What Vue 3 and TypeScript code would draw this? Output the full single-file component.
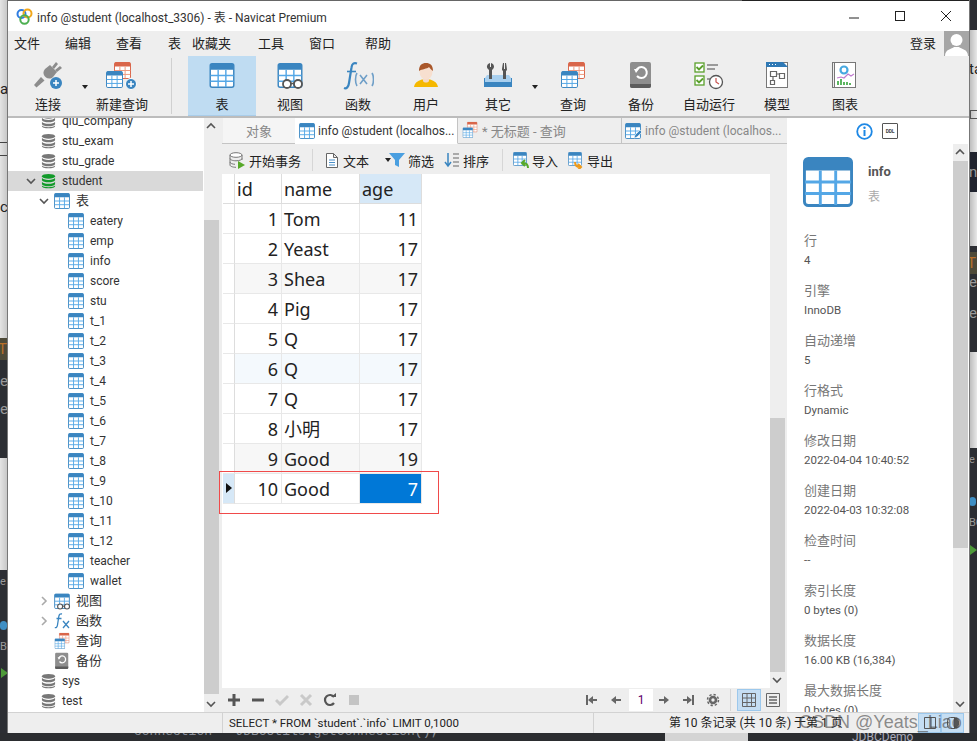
<template>
  <div class="desk">
    <svg class="defs" width="0" height="0">
      <defs>
        <symbol id="tb" viewBox="0 0 26 26">
          <rect x="0.75" y="0.75" width="24.5" height="24.5" rx="2" fill="#fff" stroke="#3a85c0" stroke-width="1.5" />
          <path d="M1 2.5a2 2 0 0 1 2-2h20a2 2 0 0 1 2 2V7H1z" fill="#3a85c0" />
          <path d="M1 13h24M1 19h24M9 7v18M17 7v18" stroke="#54a7e6" stroke-width="1.5" fill="none" />
        </symbol>
        <symbol id="tbo" viewBox="0 0 26 26">
          <rect x="0.75" y="0.75" width="24.5" height="24.5" rx="2" fill="#fff" stroke="#d9664a" stroke-width="1.5" />
          <path d="M1 2.5a2 2 0 0 1 2-2h20a2 2 0 0 1 2 2V7H1z" fill="#d9664a" />
          <path d="M1 13h24M1 19h24M9 7v18M17 7v18" stroke="#ee9a80" stroke-width="1.5" fill="none" />
        </symbol>
        <symbol id="db" viewBox="0 0 16 16">
          <ellipse cx="8" cy="3" rx="7" ry="2.6" fill="currentColor" />
          <path d="M1 4.6c1 1.6 3.5 2.2 7 2.2s6-.6 7-2.2v2.6C14 8.8 11.500 9.400 8 9.400S2 8.800 1 7.200z" fill="currentColor" />
          <path d="M1 8.800c1 1.600 3.500 2.200 7 2.200s6-.6 7-2.200v2.600C14 13 11.500 13.600 8 13.600S2 13 1 11.400z" fill="currentColor" />
          <path d="M1 12.800c1 1.200 3.500 1.800 7 1.800s6-.6 7-1.800v.7c0 1.300-3.100 2.300-7 2.300s-7-1-7-2.300z" fill="currentColor" />
        </symbol>
        <symbol id="i-conn" viewBox="0 0 32 30">
          <g fill="#8c8c8c">
            <path d="M18 4l7 7-4 5c-2 2-5 2-7 .5l-1.500-1.500c-1.500-2-1.500-5 .5-7z" />
            <path d="M20 6l4-5 2 2-4 5zM23 9l5-4 2 2-5 4z" />
            <path d="M9 16l-7 8 2.500 2.500 8-7z" />
          </g>
          <circle cx="24" cy="22" r="6" fill="#3a85c0" />
          <path d="M21 22h6M24 19v6" stroke="#fff" stroke-width="1.500" />
        </symbol>
        <symbol id="i-new" viewBox="0 0 32 30">
          <use href="#tbo" x="8" y="1" width="17" height="17" />
          <use href="#tb" x="0" y="10" width="17" height="17" />
          <circle cx="25" cy="23" r="5.500" fill="#3a85c0" stroke="#fff" />
          <path d="M22 23h6M25 20v6" stroke="#fff" stroke-width="1.500" />
        </symbol>
        <symbol id="i-table" viewBox="0 0 32 30">
          <use href="#tb" x="3" y="2" width="26" height="25" />
        </symbol>
        <symbol id="i-view" viewBox="0 0 32 30">
          <use href="#tb" x="3" y="2" width="26" height="25" />
          <circle cx="13" cy="23" r="4" fill="#fff" stroke="#555" stroke-width="1.800" />
          <circle cx="24" cy="23" r="4" fill="#fff" stroke="#555" stroke-width="1.800" />
          <path d="M17 22.500h3" stroke="#555" stroke-width="1.500" />
        </symbol>
        <symbol id="i-fx" viewBox="0 0 32 30">
          <path d="M15 2.500c-3-1-5 0-5.500 4L7 22c-.5 4-2.500 6-5 5" fill="none" stroke="#3a85c0" stroke-width="2.200" />
          <path d="M5 10.500h9" stroke="#3a85c0" stroke-width="1.600" />
          <path d="M15 12c-2 3-2 10 0 13M30 12c2 3 2 10 0 13M18 14l7 9M25 14l-7 9" fill="none" stroke="#6f9fc8" stroke-width="1.600" />
        </symbol>
        <symbol id="i-fxs" viewBox="0 0 16 16">
          <path d="M8 1C6 .5 5.200 1.500 4.800 3.500L3.500 12c-.3 2-1.300 3-2.700 2.500" fill="none" stroke="#3a85c0" stroke-width="1.300" />
          <path d="M2.500 5.500h5M9 8l6 7M15 8l-6 7" fill="none" stroke="#3a85c0" stroke-width="1.300" />
        </symbol>
        <symbol id="i-user" viewBox="0 0 32 30">
          <path d="M4 26c1-6 6-6.500 8-7.500h8c2 1 7 1.500 8 7.500z" fill="#f5b800" />
          <path d="M13 16h6v4c-1 2-5 2-6 0z" fill="#f3d9c8" />
          <ellipse cx="16" cy="10.500" rx="6.500" ry="8" fill="#f7dfcf" />
          <path d="M9 10c0-6 3-8 7-8s7 2 7 8c-2-1-3-3-4-4-2 2-7 2-10 4z" fill="#a9572a" />
        </symbol>
        <symbol id="i-other" viewBox="0 0 32 30">
          <path d="M2 17h3v3h22v-3h3v9H2z" fill="#3a85c0" />
          <path d="M3 17l2-3h22l2 3v4H3z" fill="#a9d0ef" />
          <path d="M8 2c-3 1-4 4-2 6l1 1v9h3V9l1-1c2-2 1-5-2-6v4H8z" fill="#555" />
          <path d="M21 2c0 0-1 5-1 7l1 1v8h3v-8l1-1c0-2-1-7-1-7h-1v6h-1V2z" fill="#555" />
        </symbol>
        <symbol id="i-query" viewBox="0 0 32 30">
          <use href="#tbo" x="11" y="1" width="17" height="17" />
          <use href="#tb" x="4" y="10" width="17" height="17" />
        </symbol>
        <symbol id="i-backup" viewBox="0 0 32 30">
          <rect x="5" y="1" width="21" height="26" rx="2" fill="#8e8e8e" />
          <path d="M5 23h21v2a2 2 0 0 1-2 2H7a2 2 0 0 1-2-2z" fill="#5c5c5c" />
          <path d="M11 10a5.500 5.500 0 1 1 1 5" fill="none" stroke="#fff" stroke-width="2" />
          <path d="M9 8l5 0-3 4z" fill="#fff" />
        </symbol>
        <symbol id="i-auto" viewBox="0 0 32 30">
          <rect x="2" y="2" width="9" height="9" fill="#fff" stroke="#5aa02c" stroke-width="1.300" />
          <rect x="2" y="15" width="9" height="9" fill="#fff" stroke="#5aa02c" stroke-width="1.300" />
          <path d="M3.500 6l2.500 2.500 4-4M3.500 19l2.500 2.500 4-4" fill="none" stroke="#5aa02c" stroke-width="1.800" />
          <path d="M14 4h11M14 8h8M14 18h3" stroke="#9a9a9a" stroke-width="1.800" />
          <circle cx="23" cy="21" r="6.500" fill="#fff" stroke="#555" stroke-width="1.300" />
          <path d="M23 17v4l3 2" fill="none" stroke="#c9534f" stroke-width="1.200" />
        </symbol>
        <symbol id="i-model" viewBox="0 0 32 30">
          <rect x="5.500" y="1.500" width="21" height="25" fill="#fff" stroke="#777" />
          <path d="M5 1h17l5 5H5z" fill="#2f79b5" />
          <path d="M8 3.500h1M11 3.500h1M14 3.500h1" stroke="#fff" />
          <path d="M9.500 10.500h6v5h-6zM18.500 12.500h5v5h-5zM9.500 19.500h4v4h-4zM15.500 13h3M12 15.500v4" fill="none" stroke="#666" stroke-width="1.200" />
        </symbol>
        <symbol id="i-chart" viewBox="0 0 32 30">
          <rect x="3.500" y="1.500" width="3" height="25" fill="#eee" stroke="#777" />
          <rect x="5.500" y="1.500" width="21" height="25" fill="#fff" stroke="#777" />
          <circle cx="15" cy="9" r="3.500" fill="none" stroke="#47a8e0" stroke-width="2.200" />
          <path d="M8 17l4-1 3 1 4-4 3 2 3-2" fill="none" stroke="#c07ccf" stroke-width="1.200" />
          <path d="M9 24v-4M12 24v-6M15 24v-3M18 24v-3M21 24v-2" stroke="#4caf50" stroke-width="1.800" />
        </symbol>
      </defs>
    </svg>

    <!-- 窗口背后露出的桌面 -->
    <div class="back back-left">
      <span class="b-a">a</span>
      <span class="b-lines"></span>
      <span class="b-c">c</span>
      <div class="b-dark b-dark1"><span class="b-t">T</span><span class="b-e e1">e</span><span class="b-e e2">e</span></div>
      <div class="b-dark b-dark2">
        <span class="b-e small l-e">e</span>
        <span class="b-bird l-bird"></span>
        <span class="b-e small l-bc">BC</span>
        <span class="b-play l-play"></span>
      </div>
    </div>
    <div class="back back-right">
      <div class="b-dark r-top"></div>
      <span class="b-ta">ta</span>
      <span class="b-box"></span>
      <div class="b-navy">n</div>
      <div class="b-dark r-mid"><span class="b-t t2">T</span><span class="b-e e3">e</span><span class="b-e e4">e</span></div>
      <div class="b-dark r-low">
        <span class="b-e small r-e">e</span>
        <span class="b-bird r-bird"></span>
        <span class="b-e small r-bc">BC</span>
        <span class="b-play r-play"></span>
      </div>
    </div>
    <div class="back-bottom">
      <span class="code">connection = JDBCUtils.getConnection();</span>
      <i class="strip"></i>
      <span class="jd">JDBCDemo</span>
    </div>

    <div class="window">
      <header class="titlebar">
        <svg class="logo" width="17" height="17" viewBox="0 0 17 17">
          <circle cx="5.500" cy="6" r="4" fill="none" stroke="#2f7de1" stroke-width="2" />
          <circle cx="11.500" cy="5.500" r="4" fill="none" stroke="#f2a71b" stroke-width="2" />
          <circle cx="8.500" cy="11.500" r="4.200" fill="none" stroke="#4caf50" stroke-width="2" />
        </svg>
        <span class="title">info @student (localhost_3306) - 表 - Navicat Premium</span>
        <div class="winctl">
          <svg width="12" height="12" viewBox="0 0 12 12"><path d="M1 8h10" stroke="#222" /></svg>
          <svg width="12" height="12" viewBox="0 0 12 12"><rect x="1.500" y="1.500" width="9" height="9" fill="none" stroke="#222" /></svg>
          <svg width="12" height="12" viewBox="0 0 12 12"><path d="M1 1l10 10M11 1L1 11" stroke="#222" /></svg>
        </div>
      </header>

      <nav class="menubar">
        <span v-for="m in menus" :key="m.t" class="menu" :style="{ width: m.w + 'px' }">{{ m.t }}</span>
        <span class="login">登录</span>
        <div class="avatar">
          <svg width="25" height="25" viewBox="0 0 25 25">
            <circle cx="12.500" cy="9" r="6" fill="#fff" />
            <path d="M1 25c0-7 7-7 9-9h5c2 2 9 2 9 9z" fill="#fff" />
          </svg>
        </div>
      </nav>

      <div class="toolbar">
        <div v-for="b in tools" :key="b.label" class="tool" :class="[b.cls, { on: b.on }]">
          <svg width="32" height="30"><use :href="'#i-' + b.icon" /></svg>
          <span>{{ b.label }}</span>
          <i v-if="b.arrow" class="drop"></i>
        </div>
      </div>

      <div class="body">
        <aside class="side">
          <div class="tree">
            <div
              v-for="r in tree"
              :key="r.name"
              class="node"
              :class="{ sel: r.sel }"
              :style="{ paddingLeft: r.pad + 'px' }"
            >
              <svg v-if="r.chev" class="chev" width="10" height="10" viewBox="0 0 10 10">
                <path
                  :d="r.chev === 'open' ? 'M1 3l4 4 4-4' : 'M3 1l4 4-4 4'"
                  fill="none"
                  :stroke="r.chev === 'open' ? '#555' : '#aaa'"
                  stroke-width="1.600"
                />
              </svg>
              <svg
                v-if="r.icon === 'db' || r.icon === 'dbon'"
                class="ic"
                width="15"
                height="16"
                :class="r.icon"
              ><use href="#db" /></svg>
              <svg v-else-if="r.wide" class="ic wide" width="20" height="19"><use :href="r.icon" /></svg>
              <svg v-else class="ic" width="16" height="16"><use :href="r.icon" /></svg>
              <span class="nm" :class="{ cj: r.big }">{{ r.name }}</span>
            </div>
          </div>
          <div class="vbar tree-bar">
            <svg class="arr" width="10" height="10" viewBox="0 0 10 10"><path d="M1 7l4-4 4 4" fill="none" stroke="#555" stroke-width="1.600" /></svg>
            <div class="spacer" style="height: 89px"></div>
            <div class="thumb" style="height: 474px"></div>
            <svg class="arr dn" width="10" height="10" viewBox="0 0 10 10"><path d="M1 3l4 4 4-4" fill="none" stroke="#555" stroke-width="1.600" /></svg>
          </div>
        </aside>

        <main class="center">
          <div class="tabs">
            <div class="tab obj">对象</div>
            <div class="tab act">
              <svg width="16" height="16"><use href="#tb" /></svg>
              <span>info @student (localhos...</span>
            </div>
            <div class="tab q">
              <svg class="wide" width="20" height="19"><use href="#i-query" /></svg>
              <span>* 无标题 - 查询</span>
            </div>
            <div class="tab last">
              <svg width="16" height="16"><use href="#tb" /><path d="M9 15l1-3 5-5 2 2-5 5z" fill="#3a85c0" stroke="#fff" stroke-width=".6" /></svg>
              <span>info @student (localhos...</span>
            </div>
          </div>

          <div class="actions">
            <div class="act-item" style="width: 83px">
              <svg width="17" height="17" viewBox="0 0 17 17">
                <ellipse cx="7" cy="3" rx="6" ry="2.300" fill="#fff" stroke="#777" />
                <path d="M1 3v10c0 1.300 2.700 2.300 6 2.300M13 3v5M1 6.500c0 1.300 2.700 2.300 6 2.300s6-1 6-2.300M1 10c0 1.300 2.700 2.300 5 2.300" fill="none" stroke="#777" />
                <path d="M9 9l7 4-7 4z" fill="#57a829" />
              </svg>
              <span>开始事务</span>
            </div>
            <i class="vsep"></i>
            <div class="act-item" style="width: 65px; margin-left: 11px">
              <svg width="16" height="17" viewBox="0 0 16 17">
                <path d="M2.500 1.500h7l4 4v10h-11zM9.500 1.500v4h4" fill="#fff" stroke="#666" />
                <path d="M5 8h6M5 10.500h6M5 13h6" stroke="#4a90c9" />
              </svg>
              <span>文本</span>
              <i class="drop small"></i>
            </div>
            <div class="act-item" style="width: 55px">
              <svg width="16" height="16" viewBox="0 0 16 16"><path d="M0 1h16L10 8v7l-4-2V8z" fill="#4a9fe0" /></svg>
              <span>筛选</span>
            </div>
            <div class="act-item" style="width: 58px">
              <svg width="16" height="16" viewBox="0 0 16 16">
                <path d="M4 1v12M1 10l3 4 3-4" fill="none" stroke="#3a85c0" stroke-width="1.500" />
                <path d="M9 2h6M9 6h6M9 10h6M9 14h6" stroke="#666" />
              </svg>
              <span>排序</span>
            </div>
            <i class="vsep"></i>
            <div class="act-item" style="width: 55px; margin-left: 10px">
              <svg width="16" height="17"><use href="#tb" width="14" height="14" /><path d="M15 16c0-3-2-5-5-5M12 8l-3 3 3 3" fill="none" stroke="#57a829" stroke-width="2" /></svg>
              <span>导入</span>
            </div>
            <div class="act-item">
              <svg width="16" height="17"><use href="#tb" width="14" height="14" /><path d="M7 10c0 3 2 5 5 5M10 12l3 3-3 3" fill="none" stroke="#ef9a1a" stroke-width="2" /></svg>
              <span>导出</span>
            </div>
          </div>

          <div class="gridwrap">
            <div class="grid">
              <div class="g-row head">
                <div class="c ind"></div>
                <div class="c id">id</div>
                <div class="c name">name</div>
                <div class="c age cur">age</div>
              </div>
              <div v-for="(r, i) in rows" :key="r.id" class="g-row" :class="rowClass(i)">
                <div class="c ind"><i v-if="i === 9" class="mark"></i></div>
                <div class="c id num">{{ r.id }}</div>
                <div class="c name">{{ r.name }}</div>
                <div class="c age num">{{ r.age }}</div>
              </div>
            </div>
            <div class="vbar grid-bar">
              <div class="spacer" style="height: 244px"></div>
              <div class="thumb" style="height: 254px"></div>
              <svg class="arr dn" width="10" height="10" viewBox="0 0 10 10"><path d="M1 3l4 4 4-4" fill="none" stroke="#555" stroke-width="1.600" /></svg>
            </div>
            <div class="redbox"></div>
          </div>

          <div class="gridfoot">
            <div class="ed">
              <svg width="14" height="14" viewBox="0 0 14 14"><path d="M7 1v12M1 7h12" stroke="#555" stroke-width="3" /></svg>
              <svg width="14" height="14" viewBox="0 0 14 14"><path d="M1 7h12" stroke="#555" stroke-width="3" /></svg>
              <svg width="14" height="14" viewBox="0 0 14 14"><path d="M1 7l4 4 8-8" fill="none" stroke="#c9c9c9" stroke-width="3" /></svg>
              <svg width="14" height="14" viewBox="0 0 14 14"><path d="M2 2l10 10M12 2L2 12" stroke="#c9c9c9" stroke-width="3" /></svg>
              <svg width="14" height="14" viewBox="0 0 14 14"><path d="M11 4a5 5 0 1 0 0 6" fill="none" stroke="#555" stroke-width="2.200" /><path d="M8 4h5V0z" fill="#555" /></svg>
              <svg width="14" height="14" viewBox="0 0 14 14"><rect x="2" y="2" width="10" height="10" fill="#c4c4c4" /></svg>
            </div>
            <div class="pager">
              <svg width="14" height="14" viewBox="0 0 14 14"><path d="M2 2v10M12 7H6" fill="none" stroke="#666" stroke-width="2" /><path d="M8 3L3 7l5 4z" fill="#666" /></svg>
              <svg width="14" height="14" viewBox="0 0 14 14"><path d="M12 7H6" stroke="#666" stroke-width="2" /><path d="M7 3L2 7l5 4z" fill="#666" /></svg>
              <span class="page">1</span>
              <svg class="after-page" width="14" height="14" viewBox="0 0 14 14"><path d="M2 7h6" stroke="#666" stroke-width="2" /><path d="M7 3l5 4-5 4z" fill="#666" /></svg>
              <svg width="14" height="14" viewBox="0 0 14 14"><path d="M12 2v10M2 7h6" fill="none" stroke="#666" stroke-width="2" /><path d="M6 3l5 4-5 4z" fill="#666" /></svg>
              <svg class="gear" width="14" height="14" viewBox="0 0 14 14"><circle cx="7" cy="7" r="3" fill="none" stroke="#666" stroke-width="2.600" /><circle cx="7" cy="7" r="5.500" fill="none" stroke="#666" stroke-width="1.500" stroke-dasharray="2.300 2" /></svg>
              <i class="vsep foot-sep"></i>
              <span class="mode on">
                <svg width="14" height="14" viewBox="0 0 14 14"><path d="M.5.5h13v13H.5zM.5 5h13M.5 9.500h13M5 .5v13M9.500.5v13" fill="none" stroke="#666" /></svg>
              </span>
              <svg class="form" width="14" height="14" viewBox="0 0 14 14"><path d="M.5.5h13v13H.5z" fill="none" stroke="#666" /><path d="M3 4h8M3 7h8M3 10h8" stroke="#666" stroke-width="1.500" /></svg>
            </div>
          </div>
        </main>

        <aside class="info">
          <div class="info-tabs">
            <svg width="17" height="17" viewBox="0 0 17 17">
              <circle cx="8.500" cy="8.500" r="7.300" fill="none" stroke="#1e88e5" stroke-width="1.800" />
              <path d="M8.500 7v6" stroke="#1e88e5" stroke-width="2" />
              <circle cx="8.500" cy="4.700" r="1.200" fill="#1e88e5" />
            </svg>
            <span class="ddl">DDL</span>
          </div>
          <div class="info-main">
            <div class="info-body">
              <div class="info-head">
                <svg width="52" height="50"><use href="#tb" width="52" height="50" /></svg>
                <div class="info-title">
                  <b>info</b>
                  <span>表</span>
                </div>
              </div>
              <div v-for="p in props" :key="p.k" class="prop">
                <span class="k">{{ p.k }}</span>
                <span class="v">{{ p.v }}</span>
              </div>
            </div>
            <div class="vbar info-bar">
              <svg class="arr" width="10" height="10" viewBox="0 0 10 10"><path d="M1 7l4-4 4 4" fill="none" stroke="#555" stroke-width="1.600" /></svg>
              <div class="thumb" style="height: 387px"></div>
              <svg class="arr dn" width="10" height="10" viewBox="0 0 10 10"><path d="M1 3l4 4 4-4" fill="none" stroke="#555" stroke-width="1.600" /></svg>
            </div>
          </div>
        </aside>
      </div>

      <footer class="status">
        <div class="s-sql">SELECT * FROM `student`.`info` LIMIT 0,1000</div>
        <div class="s-count">第 10 条记录 (共 10 条) 于第 1 页</div>
        <span class="s-btn">
          <svg width="14" height="14" viewBox="0 0 14 14"><path d="M1.500 1.500h11v11h-11zM8 1.500v11" fill="none" stroke="#555" /></svg>
        </span>
        <span class="s-btn">
          <svg width="14" height="14" viewBox="0 0 14 14"><rect x="1.500" y="1.500" width="11" height="11" rx="3" fill="none" stroke="#555" /><path d="M8 2h3l1 2v6l-1 2H8z" fill="#555" /></svg>
        </span>
      </footer>
    </div>
    <div class="watermark">CSDN @Yeats_Liao</div>
  </div>
</template>

<script setup lang="ts">
interface TreeRow {
  name: string
  pad: number
  icon: string
  chev?: 'open' | 'closed'
  sel?: boolean
  big?: boolean
  wide?: boolean
}

const menus = [
  { t: '文件', w: 51 },
  { t: '编辑', w: 51 },
  { t: '查看', w: 52 },
  { t: '表', w: 24 },
  { t: '收藏夹', w: 66 },
  { t: '工具', w: 51 },
  { t: '窗口', w: 56 },
  { t: '帮助', w: 50 }
]

const tools = [
  { label: '连接', icon: 'conn', arrow: true, cls: 'first' },
  { label: '新建查询', icon: 'new', cls: 'newq' },
  { label: '表', icon: 'table', on: true },
  { label: '视图', icon: 'view' },
  { label: '函数', icon: 'fx' },
  { label: '用户', icon: 'user' },
  { label: '其它', icon: 'other', arrow: true, cls: 'other' },
  { label: '查询', icon: 'query' },
  { label: '备份', icon: 'backup' },
  { label: '自动运行', icon: 'auto' },
  { label: '模型', icon: 'model' },
  { label: '图表', icon: 'chart' }
]

const tableNames = [
  'eatery', 'emp', 'info', 'score', 'stu', 't_1', 't_2', 't_3', 't_4', 't_5',
  't_6', 't_7', 't_8', 't_9', 't_10', 't_11', 't_12', 'teacher', 'wallet'
]

const tree: TreeRow[] = [
  { name: 'qiu_company', pad: 33, icon: 'db' },
  { name: 'stu_exam', pad: 33, icon: 'db' },
  { name: 'stu_grade', pad: 33, icon: 'db' },
  { name: 'student', pad: 33, icon: 'dbon', chev: 'open', sel: true },
  { name: '表', pad: 46, icon: '#tb', chev: 'open', big: true },
  ...tableNames.map((name) => ({ name, pad: 60, icon: '#tb' })),
  { name: '视图', pad: 46, icon: '#i-view', chev: 'closed', big: true, wide: true },
  { name: '函数', pad: 46, icon: '#i-fxs', chev: 'closed', big: true },
  { name: '查询', pad: 46, icon: '#i-query', big: true, wide: true },
  { name: '备份', pad: 46, icon: '#i-backup', big: true, wide: true },
  { name: 'sys', pad: 33, icon: 'db' },
  { name: 'test', pad: 33, icon: 'db' }
]

const rows = [
  { id: 1, name: 'Tom', age: 11 },
  { id: 2, name: 'Yeast', age: 17 },
  { id: 3, name: 'Shea', age: 17 },
  { id: 4, name: 'Pig', age: 17 },
  { id: 5, name: 'Q', age: 17 },
  { id: 6, name: 'Q', age: 17 },
  { id: 7, name: 'Q', age: 17 },
  { id: 8, name: '小明', age: 17 },
  { id: 9, name: 'Good', age: 19 },
  { id: 10, name: 'Good', age: 7 }
]

const props = [
  { k: '行', v: '4' },
  { k: '引擎', v: 'InnoDB' },
  { k: '自动递增', v: '5' },
  { k: '行格式', v: 'Dynamic' },
  { k: '修改日期', v: '2022-04-04 10:40:52' },
  { k: '创建日期', v: '2022-04-03 10:32:08' },
  { k: '检查时间', v: '--' },
  { k: '索引长度', v: '0 bytes (0)' },
  { k: '数据长度', v: '16.00 KB (16,384)' },
  { k: '最大数据长度', v: '0 bytes (0)' }
]

function rowClass(i: number) {
  if (i === 9) return 'current'
  if (i === 5) return 'tint'
  return i === 2 || i === 8 ? 'alt' : ''
}
</script>

<style>
html,
body {
  margin: 0;
  background: #2b2d30;
}
</style>

<style scoped>
.desk {
  position: relative;
  width: 977px;
  height: 741px;
  overflow: hidden;
  background: #2b2d30;
  font-family: Roboto, "Noto Sans CJK SC", sans-serif;
  color: #222;
}

.defs {
  position: absolute;
}

.back {
  position: absolute;
  top: 0;
  height: 741px;
  width: 8px;
  overflow: hidden;
  background: linear-gradient(to right, #e4e4e4, #c4c4c4);
  font-size: 15px;
}

.back-left {
  left: 0;
}

.back-right {
  right: 0;
  background: linear-gradient(to right, #b8b8b8, #e8e8e8);
}

.back-bottom {
  position: absolute;
  left: 0;
  right: 0;
  top: 733px;
  height: 8px;
  overflow: hidden;
  background: #2b2d30;
}

.code {
  position: absolute;
  left: 134px;
  top: -9px;
  font-family: "Liberation Mono", monospace;
  font-size: 13px;
  color: #8a8f99;
}

.strip {
  position: absolute;
  left: 665px;
  top: 0;
  width: 83px;
  height: 8px;
  background: #d4d4d4;
}

.jd {
  position: absolute;
  left: 852px;
  top: -3px;
  font-size: 12px;
  color: #aab;
}

.b-a,
.b-c,
.b-lines,
.b-ta,
.b-box {
  position: absolute;
}

.b-a {
  left: 0;
  top: 80px;
}

.b-c {
  left: 0;
  top: 198px;
}

.b-lines {
  left: 0;
  top: 142px;
  width: 8px;
  height: 12px;
  border-top: 1px solid #444;
  border-bottom: 1px solid #444;
}

.b-ta {
  left: 0;
  top: 60px;
}

.b-box {
  left: 1px;
  top: 110px;
  width: 8px;
  height: 7px;
  border: 1px solid #555;
}

.b-dark {
  position: absolute;
  left: 0;
  width: 8px;
  background: #2c2e33;
}

.b-dark1 {
  top: 338px;
  height: 120px;
}

.b-dark2 {
  top: 570px;
  height: 171px;
}

.b-play {
  position: absolute;
  left: 1px;
  border-left: 7px solid #4e9a3a;
  border-top: 5px solid transparent;
  border-bottom: 5px solid transparent;
}

.l-play {
  top: 98px;
}

.r-play {
  top: 97px;
}

.b-bird {
  position: absolute;
  left: 0;
  width: 7px;
  height: 9px;
  border-radius: 4px;
  background: #3f8fc4;
}

.l-bird {
  top: 51px;
}

.r-bird {
  top: 49px;
}

.b-t {
  position: absolute;
  left: -2px;
  top: 0;
  width: 10px;
  height: 22px;
  background: #4e4a38;
  color: #b8702a;
  line-height: 22px;
}

.t2 {
  top: 6px;
}

.b-e {
  position: absolute;
  left: 0;
  color: #999;
}

.b-e.small {
  font-size: 11px;
  line-height: 14px;
}

.e1 {
  top: 34px;
}

.e2 {
  top: 62px;
}

.e3 {
  top: 27px;
}

.e4 {
  top: 58px;
}

.l-e {
  top: 5px;
}

.l-bc {
  top: 70px;
}

.r-e {
  top: 5px;
}

.r-bc {
  top: 68px;
}

.r-top {
  top: 0;
  height: 30px;
}

.b-navy {
  position: absolute;
  top: 152px;
  height: 40px;
  width: 8px;
  background: #20232e;
  color: #999;
  line-height: 40px;
}

.r-mid {
  top: 246px;
  height: 106px;
}

.r-low {
  top: 448px;
  height: 293px;
}

.window {
  position: absolute;
  left: 8px;
  top: 0;
  width: 961px;
  height: 733px;
  display: flex;
  flex-direction: column;
  background: #eee;
  box-shadow: -1px 0 0 #777, 1px 0 0 #777;
  border-top: 1px solid #666;
  box-sizing: border-box;
}

.window::before {
  content: "";
  position: absolute;
  left: 734px;
  right: 0;
  top: -1px;
  height: 1px;
  background: #222;
}

.titlebar {
  height: 30px;
  flex: none;
  display: flex;
  align-items: center;
  background: #fff;
  padding-left: 8px;
}

.logo {
  margin-right: 4px;
}

.title {
  font-size: 12px;
  color: #333;
  white-space: nowrap;
}

.winctl {
  margin-left: auto;
  display: flex;
  gap: 34px;
  margin-right: 17px;
}

.menubar {
  height: 25px;
  flex: none;
  display: flex;
  align-items: center;
  padding-left: 6px;
  padding-bottom: 2px;
  box-sizing: border-box;
  font-size: 13px;
}

.menu {
  flex: none;
  white-space: nowrap;
}

.login {
  margin-left: auto;
  margin-right: 8px;
}

.avatar {
  width: 25px;
  height: 25px;
  margin-bottom: -2px;
  background: #a6a6a6;
  overflow: hidden;
}

.avatar svg {
  display: block;
}

.toolbar {
  height: 62px;
  flex: none;
  display: flex;
  align-items: stretch;
  box-sizing: border-box;
  border-bottom: 2px solid #bcbcbc;
  font-size: 13px;
}

.tool {
  position: relative;
  width: 68px;
  flex: none;
  display: flex;
  flex-direction: column;
  align-items: center;
  padding-top: 5px;
  box-sizing: border-box;
  white-space: nowrap;
}

.tool svg {
  display: block;
  margin-bottom: 3px;
}

.tool.on {
  background: #bfdcf2;
  border-bottom: 1px solid #a9cdea;
}

.tool.first {
  margin-left: 6px;
}

.newq {
  margin-left: 6px;
  margin-right: 32px;
}

.newq::after {
  content: "";
  position: absolute;
  right: -16px;
  top: 2px;
  bottom: 2px;
  width: 1px;
  background: #d0d0d0;
}

.other {
  margin-left: 4px;
  margin-right: 7px;
}

.drop {
  position: absolute;
  right: -6px;
  top: 29px;
  border-top: 4px solid #222;
  border-left: 3.500px solid transparent;
  border-right: 3.500px solid transparent;
}

.drop.small {
  right: -2px;
  top: 7px;
}

.body {
  flex: 1;
  min-height: 0;
  display: flex;
}

.side {
  width: 211px;
  flex: none;
  display: flex;
  background: #fff;
}

.tree {
  width: 195px;
  flex: none;
  overflow: hidden;
  margin-right: 1px;
}

.node {
  height: 20px;
  position: relative;
  display: flex;
  align-items: center;
  font-size: 12px;
  color: #222;
  white-space: nowrap;
  top: -7px;
}

.node.sel {
  background: #d9d9d9;
}

.chev {
  position: absolute;
  margin-left: -15px;
}

.ic {
  flex: none;
  color: #777;
}

.ic.wide,
.tab .wide {
  margin: 0 -2px;
  flex: none;
}

.ic.dbon {
  color: #129a2a;
}

.nm {
  margin-left: 6px;
  color: #333;
}

.nm.cj {
  font-size: 13px;
  margin-bottom: 4px;
}

.vbar {
  width: 15px;
  flex: none;
  position: relative;
  background: #eee;
}

.thumb {
  background: #cdcdcd;
}

.arr {
  position: absolute;
  left: 2px;
  top: 3px;
}

.arr.dn {
  top: auto;
  bottom: 3px;
}

.tree-bar {
  padding-top: 13px;
  box-sizing: border-box;
}

.center {
  width: 565px;
  flex: none;
  margin-left: 3px;
  display: flex;
  flex-direction: column;
  min-width: 0;
}

.tabs {
  height: 26px;
  flex: none;
  display: flex;
  border-bottom: 1px solid #c4c4c4;
  box-sizing: border-box;
  font-size: 12px;
}

.tab {
  display: flex;
  align-items: center;
  gap: 4px;
  white-space: nowrap;
  color: #888;
  overflow: hidden;
  box-sizing: border-box;
}

.obj {
  width: 72px;
  margin-left: 1px;
  justify-content: center;
  background: #f5f5f5;
  font-size: 13px;
}

.act {
  width: 163px;
  background: #fff;
  padding-left: 4px;
  gap: 3px;
  color: #333;
  border-right: 1px solid #c4c4c4;
  border-bottom: 1px solid #fff;
  height: 26px;
}

.q {
  width: 164px;
  padding-left: 4px;
  font-size: 13px;
  border-right: 1px solid #c4c4c4;
}

.last {
  width: 163px;
  padding-left: 3px;
}

.actions {
  height: 30px;
  flex: none;
  display: flex;
  align-items: center;
  padding-left: 7px;
  padding-top: 2px;
  box-sizing: border-box;
  font-size: 13px;
}

.act-item {
  position: relative;
  display: flex;
  align-items: center;
  gap: 3px;
  flex: none;
  box-sizing: border-box;
  white-space: nowrap;
}

.vsep {
  width: 1px;
  height: 22px;
  background: #d6d6d6;
  flex: none;
}

.gridwrap {
  position: relative;
  flex: 1;
  min-height: 0;
  display: flex;
  background: #fff;
  margin-right: 2px;
}

.grid {
  width: 548px;
  flex: none;
  padding-left: 1px;
  box-sizing: border-box;
  font-family: "Noto Sans", "Noto Sans CJK SC", sans-serif;
  font-size: 18px;
  color: #222;
}

.g-row {
  display: flex;
  height: 30px;
}

.c {
  box-sizing: border-box;
  height: 30px;
  line-height: 31px;
  border-right: 1px solid #e8e8e8;
  border-bottom: 1px solid #e8e8e8;
  overflow: hidden;
  white-space: nowrap;
}

.ind {
  width: 12px;
  background: #fff;
  border-right-color: #ddd;
  position: relative;
}

.id {
  width: 47px;
  padding-left: 2px;
}

.name {
  width: 78px;
  padding-left: 2px;
}

.age {
  width: 62px;
  padding-left: 2px;
}

.num {
  text-align: right;
  padding-right: 3px;
}

.head .c {
  border-color: #ddd;
}

.head .cur {
  background: #d6e8f7;
}

.alt .c:not(.ind) {
  background: #f7f7f7;
}

.tint .c:not(.ind) {
  background: #f4f9fd;
}

.current .ind {
  background: #d6e8f7;
}

.current .age {
  background: #0078d7;
  color: #fff;
}

.mark {
  position: absolute;
  left: 3px;
  top: 9px;
  border-left: 6px solid #111;
  border-top: 5px solid transparent;
  border-bottom: 5px solid transparent;
}

.grid-bar {
  background: #eee;
}

.redbox {
  position: absolute;
  left: -3px;
  top: 297px;
  width: 220px;
  height: 43px;
  border: 1px solid #f04a4a;
  box-sizing: border-box;
}

.gridfoot {
  height: 24px;
  flex: none;
  display: flex;
  align-items: center;
  padding-left: 5px;
}

.ed {
  display: flex;
  gap: 10px;
}

.pager {
  margin-left: auto;
  display: flex;
  align-items: center;
  gap: 10px;
  margin-right: 7px;
}

.page {
  width: 24px;
  height: 22px;
  line-height: 22px;
  background: #fff;
  text-align: center;
  font-size: 12px;
  color: #60006a;
  margin-left: -4px;
}

.after-page {
  margin-left: -6px;
}

.gear {
  margin-left: 1px;
}

.mode {
  width: 24px;
  height: 22px;
  box-sizing: border-box;
  display: flex;
  align-items: center;
  justify-content: center;
  border: 1px solid transparent;
  margin-left: -4px;
}

.mode.on {
  background: #c5def3;
  border-color: #9cc8ec;
}

.form {
  margin-left: -5px;
}

.info {
  width: 182px;
  flex: none;
  background: #fff;
  display: flex;
  flex-direction: column;
  overflow: hidden;
}

.info-tabs {
  height: 26px;
  flex: none;
  display: flex;
  align-items: center;
  padding-left: 69px;
  gap: 9px;
}

.ddl {
  width: 14px;
  height: 14px;
  border: 1px solid #555;
  border-radius: 1px;
  font-size: 5px;
  font-weight: 700;
  line-height: 14px;
  text-align: center;
  color: #444;
  letter-spacing: -0.2px;
}

.info-main {
  flex: 1;
  min-height: 0;
  display: flex;
}

.info-body {
  width: 166px;
  flex: none;
  overflow: hidden;
  padding-left: 17px;
  box-sizing: border-box;
}

.info-head {
  display: flex;
  padding-top: 13px;
  margin-left: -2px;
  height: 89px;
  box-sizing: border-box;
  gap: 14px;
}

.info-title {
  display: flex;
  flex-direction: column;
  padding-top: 6px;
  gap: 7px;
}

.info-title b {
  font-size: 13px;
  line-height: 18px;
  color: #555;
}

.info-title span {
  font-size: 12px;
  line-height: 18px;
  color: #aaa;
}

.prop {
  height: 50px;
  display: flex;
  flex-direction: column;
}

.prop .k {
  font-size: 13px;
  line-height: 16px;
  margin-bottom: 2px;
  color: #777;
}

.prop .v {
  font-size: 11.5px;
  line-height: 18px;
  color: #555;
  white-space: nowrap;
}

.info-bar {
  margin-right: 1px;
  padding-top: 17px;
  box-sizing: border-box;
}

.status {
  height: 21px;
  flex: none;
  display: flex;
  align-items: stretch;
  border-top: 1px solid #d2d2d2;
  box-sizing: border-box;
  font-size: 11.5px;
  line-height: 20px;
  white-space: nowrap;
}

.s-sql {
  margin-left: 214px;
  width: 372px;
  padding-left: 6px;
  box-sizing: border-box;
  border-left: 1px solid #d2d2d2;
  border-right: 1px solid #d2d2d2;
  color: #222;
}

.s-count {
  width: 324px;
  padding-left: 75px;
  box-sizing: border-box;
  font-size: 12px;
  color: #222;
}

.s-btn {
  width: 23px;
  display: flex;
  align-items: center;
  justify-content: center;
  background: #c5def3;
  border: 1px solid #9cc8ec;
  box-sizing: border-box;
}

.watermark {
  position: absolute;
  left: 799px;
  top: 710px;
  font-family: "Liberation Sans", sans-serif;
  font-size: 18px;
  line-height: 24px;
  color: rgba(70, 70, 70, 0.6);
  white-space: nowrap;
}
</style>
